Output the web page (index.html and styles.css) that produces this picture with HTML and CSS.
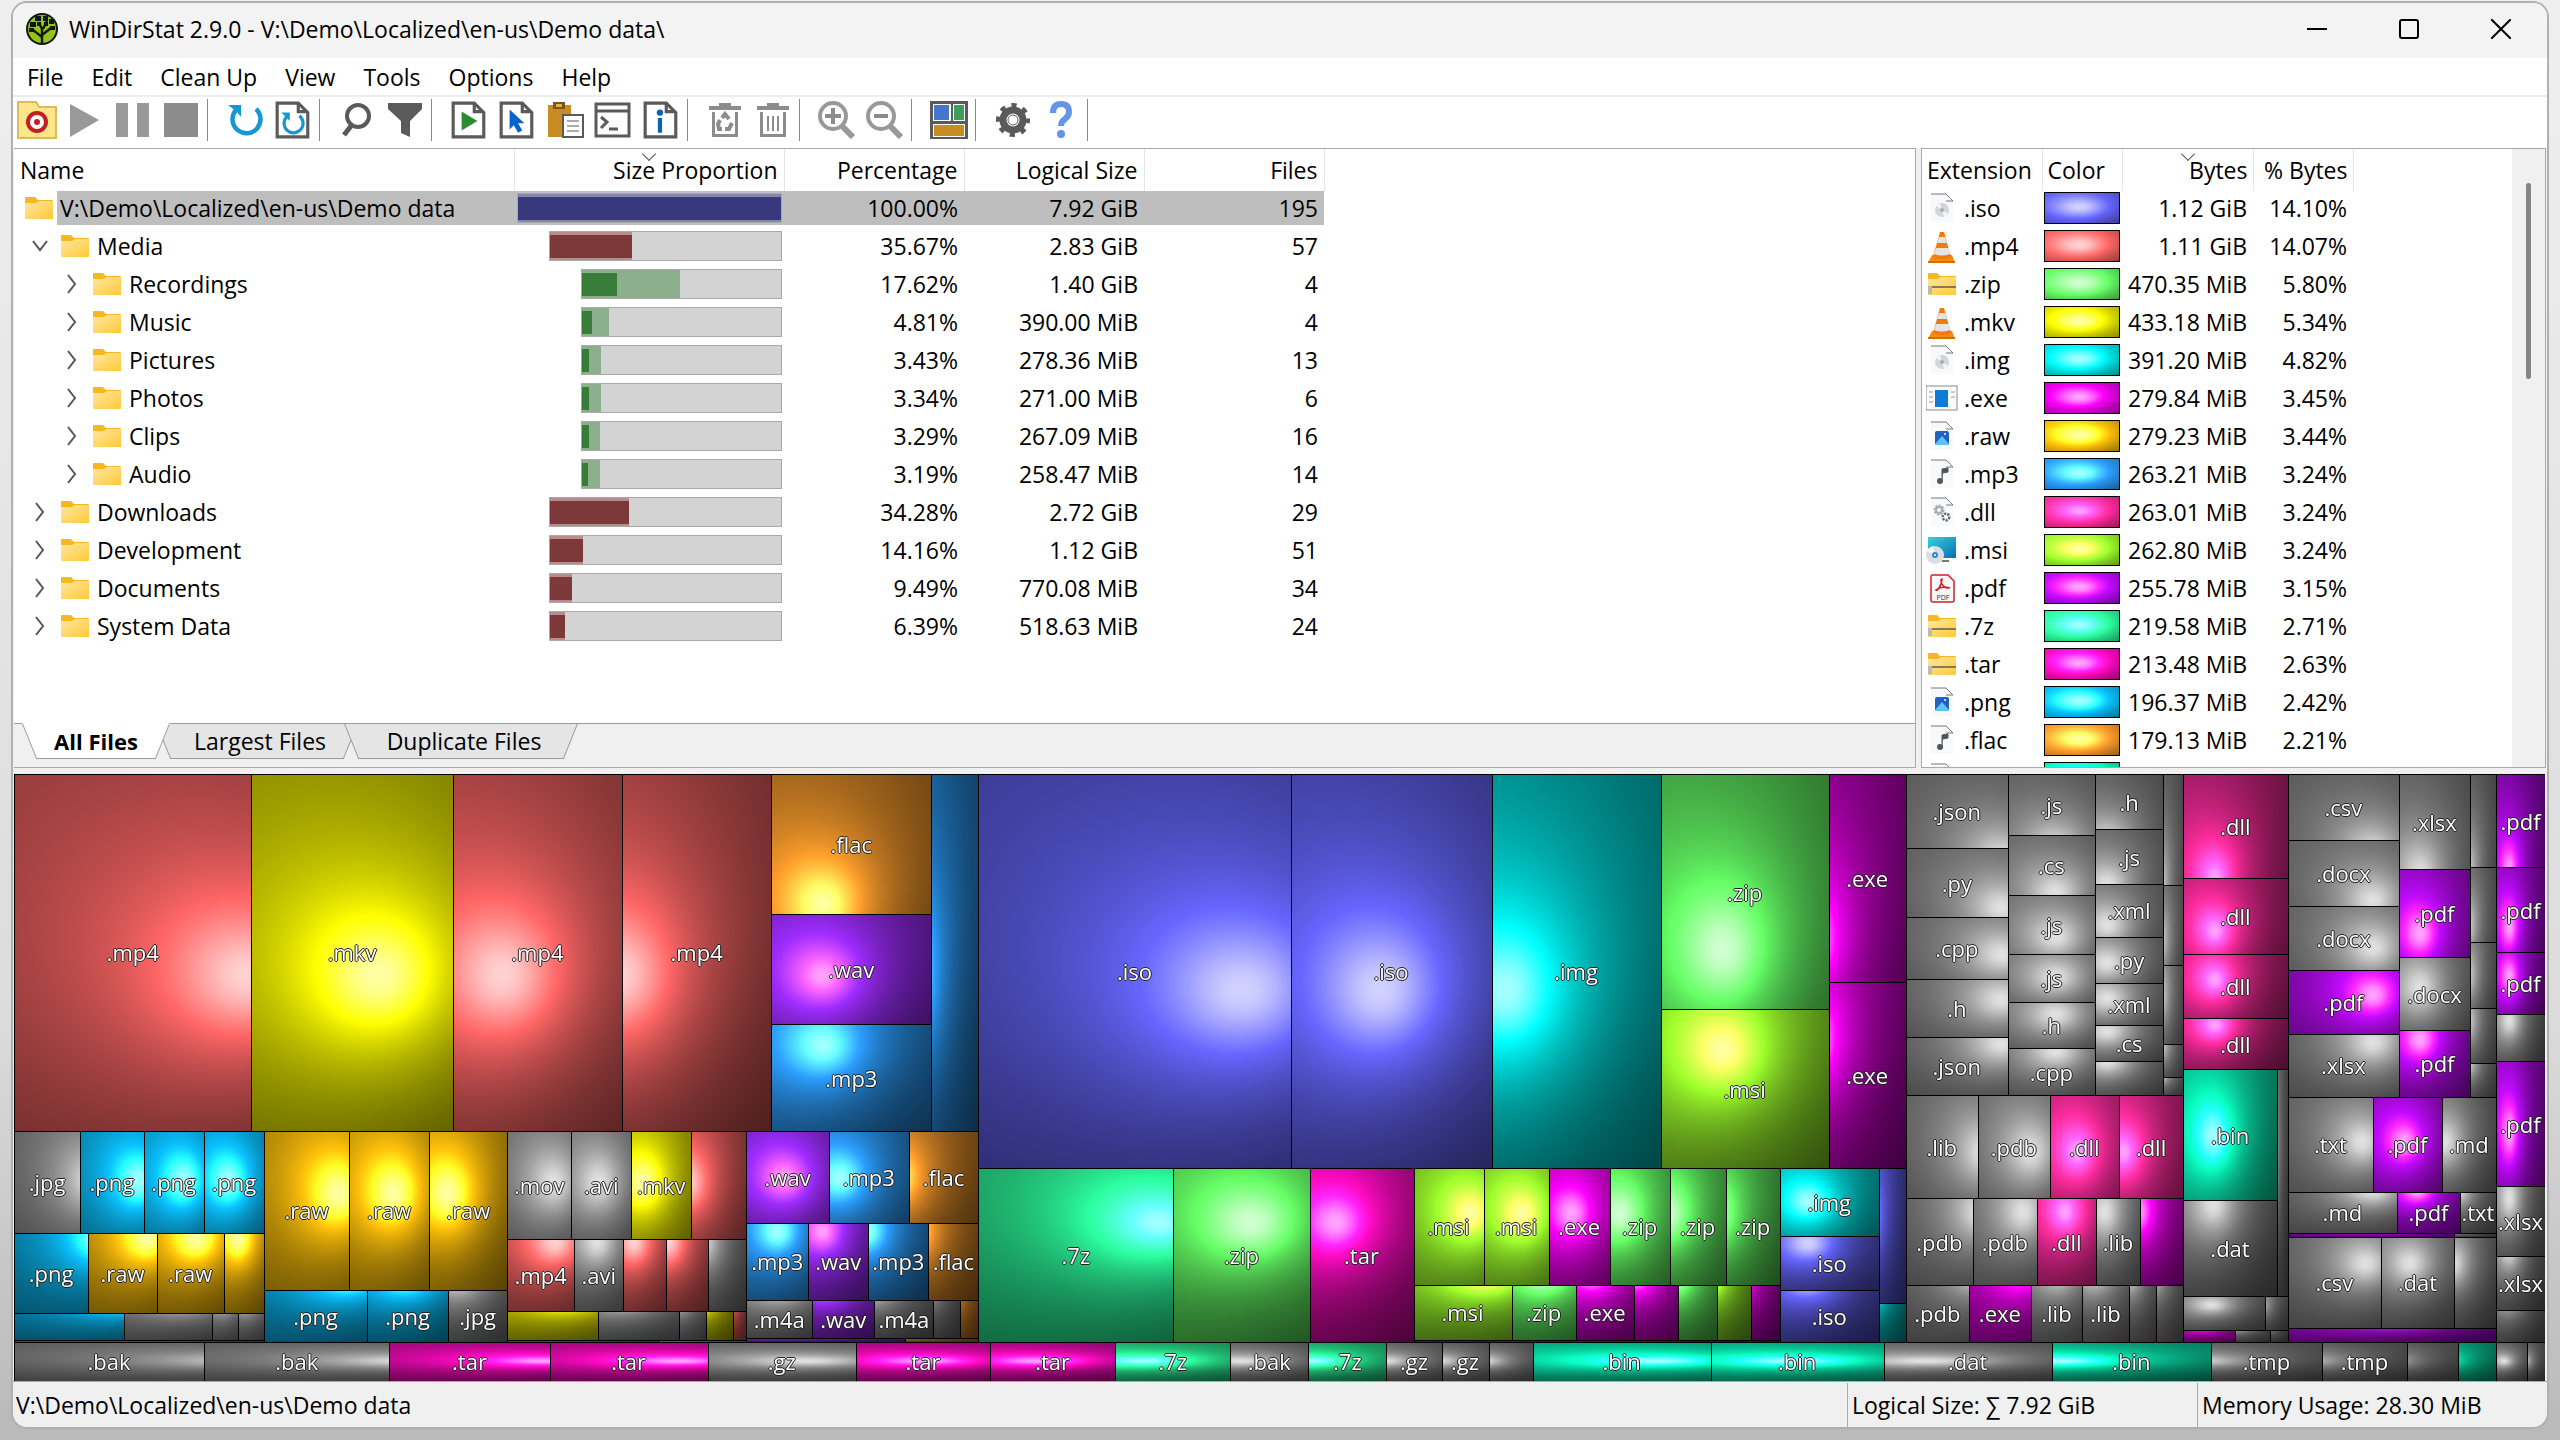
FILE: index.html
```html
<!DOCTYPE html>
<html lang="en">
<head>
    <meta charset="UTF-8">
    <meta name="viewport" content="width=device-width, initial-scale=1.0">
    <title>WinDirStat 2.9.0 - V:\Demo\Localized\en-us\Demo data\</title>
    <link rel="stylesheet" href="styles.css">
</head>
<body>
    <!-- Shared icons -->
    <svg class="sprite" aria-hidden="true">
        <defs>
            <linearGradient id="gold" x1="0" y1="0" x2="1" y2="1">
                <stop offset="0" stop-color="#ffe7a2"/>
                <stop offset="1" stop-color="#ffc938"/>
            </linearGradient>
            <linearGradient id="screen" x1="0" y1="0" x2="1" y2="1">
                <stop offset="0" stop-color="#35d3dc"/>
                <stop offset="1" stop-color="#0b6fae"/>
            </linearGradient>
            <symbol id="folder" viewBox="0 0 28 24">
                <path d="M0 2q0-1 1-1h9l3 3h14q1 0 1 1v3H0z" fill="#f5b820"/>
                <path d="M0 7h11l3-2h14v18H0z" fill="url(#gold)"/>
            </symbol>
            <symbol id="page" viewBox="0 0 32 32">
                <path d="M5 1h15l7 7v21H5z" fill="#f8f9fa"/>
                <path d="M5 1h15l7 7h-7" fill="none" stroke="#777" stroke-width="1"/>
            </symbol>
            <symbol id="i-disc" viewBox="0 0 32 32">
                <use href="#page"/>
                <circle cx="16" cy="17" r="7" fill="#d3d5d6"/>
                <path d="M16 17L10 13a7 7 0 0 1 4-3zM16 17l6 4a7 7 0 0 1-4 3z" fill="#f3f4f4"/>
                <circle cx="16" cy="17" r="2" fill="#aaa"/>
            </symbol>
            <symbol id="i-cone" viewBox="0 0 32 32">
                <path d="M6 24h20l3 8H2z" fill="#f58a0c"/>
                <path d="M2 30h27v2H2z" fill="#d96c00"/>
                <path d="M14 1h4l7 25q-9 4-18 0z" fill="#f07a10"/>
                <path d="M13 6h6l2 6H11zM10 17h13l1 6q-8 3-16 0z" fill="#e4e4e4"/>
            </symbol>
            <symbol id="i-zip" viewBox="0 0 32 32">
                <path d="M2 5q0-1 1-1h8l3 3h15q1 0 1 1v3H2z" fill="#f5b820"/>
                <path d="M2 10h10l3-2h15v18H2z" fill="url(#gold)"/>
                <path d="M3 18h27" stroke="#5f5a48" stroke-width="1.500"/>
                <path d="M2 17h4v8H2z" fill="#b9b9b9"/>
            </symbol>
            <symbol id="i-exe" viewBox="0 0 32 32">
                <rect x="0" y="3" width="31" height="24" fill="#fafafa" stroke="#8a8a8a"/>
                <rect x="9" y="7" width="13" height="17" fill="#0f7bd8"/>
                <path d="M3 9h4M3 14h4M3 19h4M25 9h4M25 14h4" stroke="#999"/>
            </symbol>
            <symbol id="i-img" viewBox="0 0 32 32">
                <use href="#page"/>
                <rect x="9" y="10" width="14" height="14" rx="2" fill="#2161c4"/>
                <path d="M9 23l7-8 7 8q0 1-2 1H11q-2 0-2-1z" fill="#5cc4f5"/>
                <circle cx="19" cy="13" r="1" fill="#fff"/>
            </symbol>
            <symbol id="i-note" viewBox="0 0 32 32">
                <use href="#page"/>
                <ellipse cx="14" cy="22" rx="3" ry="3" fill="#555"/>
                <path d="M16 22V10l6-1v4l-5 1" fill="#555" stroke="#555" stroke-width="1"/>
            </symbol>
            <symbol id="i-gears" viewBox="0 0 32 32">
                <use href="#page"/>
                <circle cx="13" cy="13" r="4" fill="none" stroke="#a5adb3" stroke-width="3" stroke-dasharray="2 1"/>
                <circle cx="13" cy="13" r="3" fill="none" stroke="#a5adb3" stroke-width="2"/>
                <circle cx="20" cy="20" r="3" fill="none" stroke="#5f666b" stroke-width="3" stroke-dasharray="2 1"/>
                <circle cx="20" cy="20" r="2" fill="#fff"/>
            </symbol>
            <symbol id="i-msi" viewBox="0 0 32 32">
                <rect x="2" y="2" width="28" height="21" fill="url(#screen)"/>
                <path d="M16 26h7" stroke="#777" stroke-width="2"/>
                <circle cx="9" cy="20" r="9" fill="#d9dee2"/>
                <path d="M9 20L1 16a9 9 0 0 1 6-5z" fill="#f6f8f9"/>
                <circle cx="9" cy="20" r="3" fill="#2f86c8"/>
                <circle cx="9" cy="20" r="1" fill="#fff"/>
            </symbol>
            <symbol id="i-pdf" viewBox="0 0 32 32">
                <path d="M6 2h16l6 6v19q0 2-2 2H7q-2 0-2-2V4q0-2 1-2z" fill="#f7f7f7" stroke="#cf2127" stroke-width="1.5"/>
                <path d="M16 6q-2 0 0 5 2 4 6 4t-3-1q-5 0-9 3 1 1 3-2 3-4 3-9z" fill="none" stroke="#cf2127" stroke-width="1.6"/>
                <text x="17" y="27" text-anchor="middle" font-size="7" fill="#333">PDF</text>
            </symbol>
            <symbol id="doc" viewBox="0 0 36 36">
                <path d="M3 2h20l9 9v23H3z" fill="#fff" stroke="#5a5a5a" stroke-width="3"/>
                <path d="M23 2v8h9" fill="none" stroke="#5a5a5a" stroke-width="3"/>
            </symbol>
        </defs>
    </svg>

    <div class="window">
        <header class="titlebar">
            <svg class="logo" viewBox="0 0 32 32" aria-hidden="true">
                <circle cx="16" cy="16" r="16" fill="#10180a"/>
                <circle cx="16" cy="16" r="14" fill="#98c11d"/>
                <path d="M16 31V15M16 24L7 17M16 22l9-7M16 16l-3-6M17 16l4-8" stroke="#10180a" stroke-width="2.4" fill="none"/>
                <path d="M4 9h6v5H4zM9 3h6v5H9zM17 3h5v5h-5zM23 6h5v5h-5zM24 13h5v4h-5zM3 15h5v4H3zM11 9h4v4h-4zM18 9h4v4h-4z" fill="#10180a"/>
            </svg>
            <h1>WinDirStat 2.9.0 - V:\Demo\Localized\en-us\Demo data\</h1>
            <div class="caption-buttons">
                <button type="button" aria-label="Minimize"><svg viewBox="0 0 20 20"><path d="M0 10h20" stroke="#000" stroke-width="2"/></svg></button>
                <button type="button" aria-label="Maximize"><svg viewBox="0 0 20 20"><rect x="1" y="1" width="18" height="18" rx="2" fill="none" stroke="#000" stroke-width="2"/></svg></button>
                <button type="button" aria-label="Close"><svg viewBox="0 0 20 20"><path d="M0 0l20 20M20 0L0 20" stroke="#000" stroke-width="2"/></svg></button>
            </div>
        </header>

        <nav class="menubar">
            <button type="button">File</button>
            <button type="button">Edit</button>
            <button type="button">Clean Up</button>
            <button type="button">View</button>
            <button type="button">Tools</button>
            <button type="button">Options</button>
            <button type="button">Help</button>
        </nav>

        <div class="toolbar" role="toolbar">
            <button type="button" aria-label="Open"><svg viewBox="0 0 40 38"><path d="M1 1h18l3 5h17v31H1z" fill="#ffe58a" stroke="#dcbc58" stroke-width="2"/><circle cx="20" cy="21" r="11" fill="#c01f24"/><circle cx="20" cy="21" r="7" fill="#fff"/><circle cx="20" cy="21" r="3" fill="#c01f24"/></svg></button>
            <button type="button" aria-label="Resume"><svg viewBox="0 0 40 38"><path d="M5 3l29 16L5 36z" fill="#999"/></svg></button>
            <button type="button" aria-label="Suspend"><svg viewBox="0 0 40 38"><path d="M3 2h12v34H3zM24 2h12v34H24z" fill="#999"/></svg></button>
            <button type="button" aria-label="Stop"><svg viewBox="0 0 40 38"><path d="M3 2h34v34H3z" fill="#8c8c8c"/></svg></button>
            <span class="sep"></span>
            <button type="button" aria-label="Refresh all"><svg viewBox="0 0 40 38"><path d="M31 8A14 14 0 1 1 11 9" fill="none" stroke="#1797d1" stroke-width="4.500"/><path d="M3 4h13v12l-4-5z" fill="#1797d1"/></svg></button>
            <button type="button" aria-label="Refresh selected"><svg viewBox="0 0 36 36"><use href="#doc"/><path d="M24 14a9 9 0 1 1-12 1" fill="none" stroke="#1797d1" stroke-width="3"/><path d="M7 11h8v8z" fill="#1797d1"/></svg></button>
            <span class="sep"></span>
            <button type="button" aria-label="Search"><svg viewBox="0 0 40 38"><circle cx="21" cy="15" r="11" fill="none" stroke="#5a5a5a" stroke-width="4"/><path d="M14 25L7 34" stroke="#5a5a5a" stroke-width="5"/></svg></button>
            <button type="button" aria-label="Filter"><svg viewBox="0 0 40 38"><path d="M3 2h34v6L25 20v16l-9-4V20L3 8z" fill="#5a5a5a"/></svg></button>
            <span class="sep"></span>
            <button type="button" aria-label="Open item"><svg viewBox="0 0 36 36"><use href="#doc"/><path d="M11 10l15 9-15 9z" fill="#2a8c34"/></svg></button>
            <button type="button" aria-label="Select in Explorer"><svg viewBox="0 0 36 36"><use href="#doc"/><path d="M11 8l14 13h-6l4 7-4 2-4-7-4 4z" fill="#0a63c9"/></svg></button>
            <button type="button" aria-label="Copy path"><svg viewBox="0 0 40 38"><path d="M3 4h23v32H3z" fill="#c78c22"/><path d="M8 1h12v7H8z" fill="#7a551a"/><path d="M11 3h6v3h-6z" fill="#e8ae45"/><path d="M18 14h20v22H18z" fill="#fff" stroke="#5a5a5a" stroke-width="2"/><path d="M22 20h12M22 25h12M22 30h12" stroke="#aaa" stroke-width="2"/></svg></button>
            <button type="button" aria-label="Command prompt"><svg viewBox="0 0 40 38"><path d="M3 3h33v32H3zM3 10h33" fill="none" stroke="#5a5a5a" stroke-width="3"/><path d="M8 16l6 5-6 6M16 28h9" fill="none" stroke="#5a5a5a" stroke-width="3"/></svg></button>
            <button type="button" aria-label="Properties"><svg viewBox="0 0 36 36"><use href="#doc"/><circle cx="17" cy="11" r="3" fill="#0a63b9"/><path d="M15 16h4v14h-4z" fill="#0a63b9"/></svg></button>
            <span class="sep"></span>
            <button type="button" aria-label="Recycle"><svg viewBox="0 0 40 38"><path d="M14 2h12v3h10v4H4V5h10zM7 11h3v22h20V11h3v25H7z" fill="#8c8c8c"/><path d="M17 17l3-4 4 5M27 22l-3 6h-4M17 28h-3l-1-5 2-4" fill="none" stroke="#8c8c8c" stroke-width="4"/></svg></button>
            <button type="button" aria-label="Delete"><svg viewBox="0 0 40 38"><path d="M14 2h12v3h10v4H4V5h10zM7 11h3v22h20V11h3v25H7z" fill="#8c8c8c"/><path d="M15 15v15M20 15v15M25 15v15" stroke="#8c8c8c" stroke-width="2"/></svg></button>
            <span class="sep"></span>
            <button type="button" aria-label="Zoom in"><svg viewBox="0 0 40 38"><circle cx="16" cy="15" r="13" fill="none" stroke="#999" stroke-width="4"/><path d="M25 25l11 11" stroke="#999" stroke-width="6"/><path d="M8 15h16M16 7v16" stroke="#8c8c8c" stroke-width="4"/></svg></button>
            <button type="button" aria-label="Zoom out"><svg viewBox="0 0 40 38"><circle cx="16" cy="15" r="13" fill="none" stroke="#999" stroke-width="4"/><path d="M25 25l11 11" stroke="#999" stroke-width="6"/><path d="M9 15h14" stroke="#8c8c8c" stroke-width="4"/></svg></button>
            <span class="sep"></span>
            <button type="button" aria-label="Show treemap"><svg viewBox="0 0 40 38"><path d="M1 0h38v38H1z" fill="#5a5a5a"/><path d="M4 3h18v17H4zM24 3h12v17H24zM4 23h32v13H4z" fill="#fff"/><path d="M5 4h15v15H5z" fill="#4775cb"/><path d="M25 4h10v15H25z" fill="#3a9f57"/><path d="M5 24h30v11H5z" fill="#c78c22"/></svg></button>
            <span class="sep"></span>
            <button type="button" aria-label="Settings"><svg viewBox="0 0 40 38"><circle cx="20" cy="19" r="10" fill="none" stroke="#5a5a5a" stroke-width="7"/><circle cx="20" cy="19" r="14" fill="none" stroke="#5a5a5a" stroke-width="6" stroke-dasharray="5 6" stroke-dashoffset="2"/><circle cx="20" cy="19" r="5" fill="none" stroke="#5a5a5a"/></svg></button>
            <button type="button" aria-label="Help"><svg viewBox="0 0 40 38"><path d="M12 12q0-9 8-9t8 8q0 4-4 7t-4 7" fill="none" stroke="#6495e6" stroke-width="6"/><circle cx="20" cy="33" r="4" fill="#6495e6"/></svg></button>
            <span class="sep"></span>
        </div>

        <main class="panes">
            <section class="tree-pane">
                <div class="tree-scroll">
                    <table class="tree">
                        <colgroup>
                            <col class="c-name"><col class="c-bar"><col class="c-pct"><col class="c-size"><col class="c-files">
                        </colgroup>
                        <thead>
                            <tr>
                                <th class="left">Name</th>
                                <th class="sorted">Size Proportion</th>
                                <th>Percentage</th>
                                <th>Logical Size</th>
                                <th>Files</th>
                            </tr>
                        </thead>
                        <tbody id="treeRows"></tbody>
                    </table>
                </div>
                <div class="tabs" role="tablist">
                    <button type="button" role="tab" class="tab tab-all active" aria-selected="true"><span>All Files</span></button>
                    <button type="button" role="tab" class="tab tab-largest" aria-selected="false"><span>Largest Files</span></button>
                    <button type="button" role="tab" class="tab tab-dup" aria-selected="false"><span>Duplicate Files</span></button>
                </div>
            </section>

            <section class="ext-pane">
                <table class="ext">
                    <colgroup>
                        <col class="c-ext"><col class="c-color"><col class="c-bytes"><col class="c-pbytes">
                    </colgroup>
                    <thead>
                        <tr>
                            <th class="left">Extension</th>
                            <th class="left">Color</th>
                            <th class="sorted">Bytes</th>
                            <th>% Bytes</th>
                        </tr>
                    </thead>
                    <tbody id="extRows"></tbody>
                </table>
                <div class="scrollbar"><div class="thumb"></div></div>
            </section>
        </main>

        <section class="treemap" id="treemap" aria-label="Treemap">
            <canvas id="cushions"></canvas>
        </section>

        <footer class="statusbar">
            <span class="path">V:\Demo\Localized\en-us\Demo data</span>
            <span class="total">Logical Size: ∑ 7.92 GiB</span>
            <span class="memory">Memory Usage: 28.30 MiB</span>
        </footer>
    </div>

    <script src="script.js"></script>
</body>
</html>
```
FILE: styles.css
```css
* {
    box-sizing: border-box;
}
body {
    margin: 0;
    height: 100vh;
    padding: 1px 11px 11px 11px;
    background: linear-gradient(#efefef, #dcdcdc 70%, #b9b9b9);
    color: #000;
    font-family: "Open Sans", "Noto Sans", sans-serif;
    font-size: 23px;
}
button {
    padding: 0;
    border: 0;
    background: none;
    color: inherit;
    font: inherit;
}
table {
    border-collapse: collapse;
    table-layout: fixed;
}
.sprite {
    position: absolute;
    width: 0;
    height: 0;
}

/* Window frame */
.window {
    display: flex;
    flex-direction: column;
    height: 100%;
    border: 2px solid #b0b0b0;
    border-radius: 16px;
    background: #f0f0f0;
    overflow: hidden;
}
.titlebar {
    display: flex;
    align-items: center;
    flex: none;
    height: 55px;
    padding-bottom: 3px;
    padding-left: 13px;
    background: #f3f3f3;
}
.titlebar h1 {
    flex: 1;
    margin: 0 0 0 11px;
    font-size: 23px;
    font-weight: normal;
}
.logo {
    width: 32px;
    height: 32px;
}
.caption-buttons {
    display: flex;
}
.caption-buttons button {
    width: 92px;
    height: 52px;
    line-height: 0;
}
.caption-buttons svg {
    width: 20px;
    height: 20px;
}
.menubar {
    display: flex;
    flex: none;
    gap: 28px;
    height: 39px;
    padding: 0 14px;
    border-bottom: 2px solid #eee;
    background: #fff;
}
.toolbar {
    display: flex;
    align-items: center;
    flex: none;
    height: 51px;
    padding-bottom: 5px;
    background: #fff;
}
.toolbar button {
    width: 48px;
    height: 44px;
    line-height: 0;
}
.toolbar svg {
    width: 40px;
    height: 38px;
}
.toolbar .sep {
    width: 1px;
    height: 42px;
    margin: 0 13px 0 2px;
    background: #8a8a8a;
}

/* Upper panes */
.panes {
    display: flex;
    flex: 620 1 0;
    gap: 5px;
    min-height: 0;
    padding: 0 1px;
}
.tree-pane, .ext-pane {
    border: 1px solid #aaa;
    background: #fff;
}
.tree-pane {
    display: flex;
    flex: 1;
    flex-direction: column;
    min-width: 0;
    border-left: 0;
}
.tree-scroll {
    flex: 1;
    min-height: 0;
    overflow: hidden;
}
th {
    position: relative;
    height: 42px;
    padding: 0 6px;
    border-right: 1px solid #e5e5e5;
    font-weight: normal;
    text-align: right;
    white-space: nowrap;
}
td {
    height: 38px;
    padding: 0 6px 4px;
    text-align: right;
    white-space: nowrap;
    line-height: 34px;
}
th.left {
    text-align: left;
}
.sorted::before {
    content: "";
    position: absolute;
    top: 0;
    left: 50%;
    width: 9px;
    height: 9px;
    border: solid #555;
    border-width: 0 1px 1px 0;
    transform: translateX(-50%) rotate(45deg);
}
.c-name { width: 500px; }
.c-bar { width: 270px; }
.c-pct { width: 180px; }
.c-size { width: 180px; }
.c-files { width: 180px; }
.tree {
    width: 1310px;
}
.tree .name {
    display: flex;
    align-items: center;
    padding: 0 0 4px;
    text-align: left;
}
.name svg.folder {
    width: 28px;
    height: 24px;
    margin-right: 4px;
}
.name span {
    padding: 0 4px;
}
.chevron {
    width: 20px;
    height: 20px;
    margin-right: 10px;
    fill: none;
    stroke: #555;
    stroke-width: 2;
}
.tree .level0 .name { padding-left: 11px; }
.tree .level1 .name { padding-left: 17px; }
.tree .level2 .name { padding-left: 49px; }
.tree .level0 .name span {
    flex: 1;
    height: 34px;
    margin-left: 1px;
    padding: 0 3px;
    background: #bebebe;
}
.tree .level0 .name svg.folder {
    margin-right: 3px;
}
.tree .level0 td + td {
    background: linear-gradient(#bebebe, #bebebe) top / 100% 34px no-repeat;
}
.tree .barcell {
    padding: 2px 2px 6px 3px;
}
.tree .level1 .barcell { padding-left: 35px; }
.tree .level2 .barcell { padding-left: 67px; }
.bar {
    position: relative;
    height: 30px;
    border: 1px solid #a9a9a9;
    background: #d3d3d3;
}
.bar div {
    position: absolute;
    left: 0;
}
.bar .share {
    top: 0;
    bottom: 0;
}
.bar .total {
    top: 3px;
    bottom: 2px;
}
.level0 .share { background: #8384b4; }
.level0 .total { background: #38397c; }
.level1 .share { background: #b98c8c; }
.level1 .total { background: #7d3839; }
.level2 .share { background: #8cb08d; }
.level2 .total { background: #387c39; }

/* Tabs under the tree */
.tabs {
    display: flex;
    flex: none;
    height: 44px;
    padding-left: 15px;
    border-top: 1px solid #999;
    background: #f0f0f0;
}
.tab {
    position: relative;
    height: 36px;
    margin-top: -1px;
    padding-left: 6px;
}
.tab span {
    position: relative;
    z-index: 1;
}
.tab::before, .tab::after {
    content: "";
    position: absolute;
    top: 0;
    bottom: 0;
    border-top: 1px solid #999;
    border-bottom: 1px solid #999;
    background: #e5e5e5;
}
.tab::before {
    left: 0;
    right: 40%;
    border-left: 1px solid #999;
    transform: skewX(22deg);
}
.tab::after {
    left: 40%;
    right: 0;
    border-right: 1px solid #999;
    transform: skewX(-22deg);
}
.tab-all { width: 134px; }
.tab-largest { width: 188px; }
.tab-dup { width: 220px; }
.tab.active {
    z-index: 1;
    padding-left: 0;
    font-weight: bold;
    font-size: 22px;
}
.tab.active::before, .tab.active::after {
    border-top-color: #fff;
    background: #fff;
}

/* Extension list */
.ext-pane {
    display: flex;
    flex: none;
    justify-content: space-between;
    width: 625px;
    overflow: hidden;
}
.ext {
    align-self: flex-start;
    width: 431px;
}
.c-ext { width: 120px; }
.c-color { width: 80px; }
.c-bytes { width: 131px; }
.c-pbytes { width: 100px; }
.ext th {
    padding: 0 5px;
}
.ext .kind {
    display: flex;
    gap: 6px;
    padding: 0 4px;
    text-align: left;
}
.kind svg {
    width: 32px;
    height: 32px;
    margin-top: 2px;
}
.ext .swatch {
    padding: 1px 2px 5px 1px;
    line-height: 0;
}
.swatch canvas {
    width: 76px;
    height: 32px;
    border: 1px solid #000;
}
.scrollbar {
    width: 33px;
    padding: 34px 14px;
    background: #f0f0f0;
}
.thumb {
    width: 5px;
    height: 196px;
    border-radius: 3px;
    background: #858585;
}

/* Treemap */
.treemap {
    position: relative;
    display: flex;
    flex: 607 1 0;
    min-height: 0;
    margin: 6px 2px 0 1px;
    background: #000;
}
.treemap canvas {
    position: absolute;
    top: 0;
    left: 0;
    width: 100%;
    height: 100%;
}
.node {
    display: flex;
    min-width: 0;
    min-height: 0;
}
.node.column {
    flex-direction: column;
}
.leaf {
    position: relative;
    align-items: center;
    justify-content: center;
    overflow: hidden;
    color: #fff;
    font-size: 22px;
    text-shadow: 1px 0 #222, -1px 0 #222, 0 1px #222, 0 -1px #222;
}

.statusbar {
    display: flex;
    align-items: center;
    flex: none;
    height: 46px;
    border-top: 1px solid #aaa;
}
.statusbar span {
    line-height: 44px;
}
.statusbar .path {
    flex: 1;
    padding-left: 3px;
}
.statusbar .total {
    width: 350px;
    padding-left: 4px;
    border-left: 1px solid #aaa;
}
.statusbar .memory {
    width: 350px;
    padding-left: 4px;
    border-left: 1px solid #aaa;
}
```
FILE: script.js
```js
// level, name, state, % of root, % of parent, size, files
const folders = [
    [0, 'V:\\Demo\\Localized\\en-us\\Demo data', '', '100.00', 100, '7.92 GiB', 195],
    [1, 'Media', 'open', '35.67', 35.67, '2.83 GiB', 57],
    [2, 'Recordings', 'closed', '17.62', 49.4, '1.40 GiB', 4],
    [2, 'Music', 'closed', '4.81', 13.5, '390.00 MiB', 4],
    [2, 'Pictures', 'closed', '3.43', 9.6, '278.36 MiB', 13],
    [2, 'Photos', 'closed', '3.34', 9.4, '271.00 MiB', 6],
    [2, 'Clips', 'closed', '3.29', 9.2, '267.09 MiB', 16],
    [2, 'Audio', 'closed', '3.19', 8.9, '258.47 MiB', 14],
    [1, 'Downloads', 'closed', '34.28', 34.28, '2.72 GiB', 29],
    [1, 'Development', 'closed', '14.16', 14.16, '1.12 GiB', 51],
    [1, 'Documents', 'closed', '9.49', 9.49, '770.08 MiB', 34],
    [1, 'System Data', 'closed', '6.39', 6.39, '518.63 MiB', 24]
];

// extension, icon, size, %
const extensions = [
    ['iso', 'disc', '1.12 GiB', '14.10%'],
    ['mp4', 'cone', '1.11 GiB', '14.07%'],
    ['zip', 'zip', '470.35 MiB', '5.80%'],
    ['mkv', 'cone', '433.18 MiB', '5.34%'],
    ['img', 'disc', '391.20 MiB', '4.82%'],
    ['exe', 'exe', '279.84 MiB', '3.45%'],
    ['raw', 'img', '279.23 MiB', '3.44%'],
    ['mp3', 'note', '263.21 MiB', '3.24%'],
    ['dll', 'gears', '263.01 MiB', '3.24%'],
    ['msi', 'msi', '262.80 MiB', '3.24%'],
    ['pdf', 'pdf', '255.78 MiB', '3.15%'],
    ['7z', 'zip', '219.58 MiB', '2.71%'],
    ['tar', 'zip', '213.48 MiB', '2.63%'],
    ['png', 'img', '196.37 MiB', '2.42%'],
    ['flac', 'note', '179.13 MiB', '2.21%']
];

const colors = {
    iso: [102, 102, 255], mp4: [255, 102, 102], zip: [102, 255, 102],
    mkv: [230, 230, 0], img: [0, 230, 230], exe: [230, 0, 230],
    raw: [255, 194, 10], mp3: [44, 159, 255], dll: [255, 44, 159],
    msi: [159, 255, 44], pdf: [194, 10, 255], '7z': [44, 255, 159],
    tar: [255, 10, 194], png: [10, 194, 255], flac: [255, 159, 44],
    bin: [10, 255, 194], wav: [159, 44, 255], other: [153, 153, 153]
};

// Treemap nodes: folders get a cushion ridge, strips only group items.
// Leaves are "size ext", with a trailing "-" when the label does not fit.
const folder = (size, dir, ...items) => ({ size, dir, items, ridge: true });
const strip = (size, dir, ...items) => ({ size, dir, items });

const root = strip(1, 'column',
    strip(567, 'row',
        folder(964, 'column', // Media
            strip(356, 'row',
                folder(757, 'row', '237 mp4', '201 mkv', '169 mp4', '149 mp4'),
                folder(207, 'row',
                    strip(160, 'column', '140 flac', '110 wav', '106 mp3'),
                    '47 mp3 -')),
            strip(211, 'row',
                folder(250, 'column',
                    strip(102, 'row', '66 jpg', '63 png', '60 png', '60 png'),
                    strip(80, 'row', '74 png', '68 raw', '67 raw', '40 raw -'),
                    strip(27, 'row', '110 png -', '88 jpg -', '26 jpg -', '26 jpg -'),
                    strip(2, 'row', '250 jpg -')),
                folder(243, 'column',
                    strip(159, 'row', '85 raw', '80 raw', '78 raw'),
                    strip(52, 'row', '103 png', '81 png', '59 jpg')),
                folder(239, 'column',
                    strip(108, 'row', '64 mov', '60 avi', '60 mkv', '55 mp4 -'),
                    strip(72, 'row', '67 mp4', '49 avi', '43 mp4 -', '42 mp4 -', '38 mov -'),
                    strip(29, 'row', '91 mkv -', '81 avi -', '27 avi -', '27 mkv -', '13 mp4 -'),
                    strip(2, 'row', '151 avi -', '88 mkv -')),
                folder(232, 'column',
                    strip(92, 'row', '83 wav', '80 mp3', '70 flac'),
                    strip(77, 'row', '62 mp3', '60 wav', '60 mp3', '50 flac'),
                    strip(38, 'row', '66 m4a', '62 wav', '59 m4a', '27 m4a -', '18 flac -'),
                    strip(4, 'row', '159 wav -', '73 flac -')))),
        folder(927, 'column', // Downloads
            strip(393, 'row',
                folder(682, 'row', '312 iso', '201 iso', '169 img'),
                folder(245, 'row',
                    strip(168, 'column', '235 zip', '158 msi'),
                    strip(77, 'column', '208 exe', '185 exe'))),
            strip(174, 'row',
                folder(435, 'row', '195 7z', '136 zip', '104 tar'),
                folder(366, 'column',
                    strip(117, 'row', '70 msi', '65 msi', '61 exe', '60 zip', '56 zip', '54 zip'),
                    strip(55, 'row', '98 msi', '64 zip', '58 exe', '44 exe -', '39 zip -', '34 msi -', '29 exe -'),
                    strip(2, 'row', '366 exe -')),
                folder(126, 'row',
                    strip(99, 'column', '68 img', '54 iso', '52 iso'),
                    strip(27, 'column', '135 iso -', '39 img -')))),
        folder(382, 'row', // Development
            strip(278, 'column',
                folder(320, 'row',
                    strip(102, 'column', '74 json', '68 py', '62 cpp', '57 h', '58 json'),
                    strip(87, 'column', '61 js', '60 cs', '58 js', '48 js', '46 h', '47 cpp'),
                    strip(68, 'column', '55 h', '55 js', '52 xml', '46 py', '42 xml', '36 cs', '34 h -'),
                    strip(20, 'column', '111 js -', '79 js -', '79 js -', '33 js -', '18 js -')),
                folder(246, 'column',
                    strip(103, 'row', '72 lib', '72 pdb', '69 dll', '64 dll'),
                    strip(86, 'row', '67 pdb', '64 pdb', '59 dll', '44 lib', '43 exe -'),
                    strip(57, 'row', '63 pdb', '62 exe', '51 lib', '47 lib', '27 lib -', '27 lib -'))),
            strip(105, 'column',
                folder(295, 'column', '104 dll', '76 dll', '64 dll', '51 dll'),
                folder(226, 'row',
                    strip(94, 'column', '130 bin', '96 dat'),
                    '11 dat -'),
                folder(46, 'column',
                    strip(34, 'row', '82 dat -', '23 dat -'),
                    strip(12, 'row', '52 exe -', '35 dat -', '18 dat -')))),
        folder(257, 'row', // Documents
            strip(208, 'column',
                folder(322, 'row',
                    strip(111, 'column', '66 csv', '66 docx', '64 docx', '64 pdf', '62 xlsx'),
                    strip(71, 'column', '95 xlsx', '88 pdf', '73 docx', '66 pdf'),
                    strip(26, 'column', '93 csv -', '75 csv -', '66 csv -', '55 csv -', '33 csv -')),
                folder(140, 'column',
                    strip(95, 'row', '85 txt', '69 pdf', '54 md'),
                    strip(41, 'row', '109 md', '63 pdf', '36 txt'),
                    strip(4, 'row', '166 pdf -', '42 txt -')),
                folder(105, 'column',
                    strip(91, 'row', '93 csv', '73 dat', '42 dat -'),
                    strip(14, 'row', '208 pdf -'))),
            strip(49, 'column',
                folder(287, 'column', '93 pdf', '85 pdf', '62 pdf', '47 md -'),
                folder(280, 'column', '124 pdf', '70 xlsx', '54 xlsx', '32 md -')))),
    folder(39, 'row', // System Data
        folder(1518, 'row', '190 bak', '185 bak', '160 tar', '158 tar', '148 gz', '134 tar', '125 tar',
            '115 7z', '78 bak', '78 7z', '55 gz', '47 gz', '44 gz -'),
        folder(963, 'row', '178 bin', '173 bin', '168 dat', '159 bin', '111 tmp', '85 tmp', '51 tmp -', '38 bin -'),
        folder(49, 'row', '31 tmp -', '18 tmp -')));

// Cushion shading settings
const HEIGHT = 0.38;
const SCALE = 0.91;
const BRIGHTNESS = 0.88 / 0.6;
const AMBIENT = 0.13;
const norm = Math.sqrt(1 + 1 + 100);
const light = [-1 / norm, -1 / norm, 10 / norm];

function addRidge(r, s, h) {
    const wf = 4 * h / (r.right - r.left);
    const hf = 4 * h / (r.bottom - r.top);
    return [s[0] - wf, s[1] - hf, s[2] + wf * (r.right + r.left), s[3] + hf * (r.bottom + r.top)];
}

// Pushes the overflow of a channel into the other two
function normalize(c) {
    for (let i = 0; i < 3; i++) {
        if (c[i] > 255) {
            const extra = (c[i] - 255) / 2;
            const j = (i + 1) % 3;
            const k = (i + 2) % 3;
            c[i] = 255;
            c[j] += extra;
            c[k] += extra;
            if (c[j] > 255) {
                c[k] += c[j] - 255;
                c[j] = 255;
            } else if (c[k] > 255) {
                c[j] += c[k] - 255;
                c[k] = 255;
            }
        }
    }
}

function drawCushion(ctx, r, s, color) {
    const w = r.right - r.left;
    const h = r.bottom - r.top;
    if (w <= 0 || h <= 0) return;
    const image = ctx.createImageData(w, h);
    let p = 0;
    for (let y = r.top; y < r.bottom; y++) {
        for (let x = r.left; x < r.right; x++) {
            const nx = -(2 * s[0] * (x + 0.5) + s[2]);
            const ny = -(2 * s[1] * (y + 0.5) + s[3]);
            const cosa = (nx * light[0] + ny * light[1] + light[2]) / Math.sqrt(nx * nx + ny * ny + 1);
            const b = (Math.max(0, Math.min(1, cosa * (1 - AMBIENT))) + AMBIENT) * BRIGHTNESS;
            const c = [color[0] * b, color[1] * b, color[2] * b];
            normalize(c);
            image.data[p++] = c[0];
            image.data[p++] = c[1];
            image.data[p++] = c[2];
            image.data[p++] = 255;
        }
    }
    ctx.putImageData(image, r.left, r.top);
}

function buildNode(node, parent) {
    const el = document.createElement('div');
    if (typeof node === 'string') {
        const [size, ext, hidden] = node.split(' ');
        el.className = 'node leaf';
        el.style.flex = size + ' 1 0';
        el.color = colors[ext] || colors.other;
        if (!hidden) el.textContent = '.' + ext;
    } else {
        el.className = 'node ' + node.dir;
        el.style.flex = node.size + ' 1 0';
        el.ridge = node.ridge;
        node.items.forEach(item => buildNode(item, el));
    }
    parent.appendChild(el);
    return el;
}

function paintNode(ctx, el, origin, surface, h) {
    const box = el.getBoundingClientRect();
    const r = {
        left: Math.round(box.left - origin.left),
        top: Math.round(box.top - origin.top),
        right: Math.round(box.right - origin.left),
        bottom: Math.round(box.bottom - origin.top)
    };
    if (el.color) {
        const s = addRidge(r, surface, h);
        drawCushion(ctx, { left: r.left + 1, top: r.top + 1, right: r.right, bottom: r.bottom }, s, el.color);
        return;
    }
    if (el.ridge) {
        surface = addRidge(r, surface, h);
        h *= SCALE;
    }
    for (const child of el.children) paintNode(ctx, child, origin, surface, h);
}

function paintTreemap() {
    const canvas = document.getElementById('cushions');
    const origin = canvas.getBoundingClientRect();
    canvas.width = Math.round(origin.width);
    canvas.height = Math.round(origin.height);
    paintNode(canvas.getContext('2d'), rootEl, origin, [0, 0, 0, 0], HEIGHT * SCALE);
}

const chevrons = { open: 'M2 5l7 9 7-9', closed: 'M5 1l7 9-7 9' };

document.getElementById('treeRows').innerHTML = folders.map(([level, name, state, pct, share, size, files]) => `
    <tr class="level${level}">
        <td class="name">
            ${state ? `<svg class="chevron" viewBox="0 0 20 20"><path d="${chevrons[state]}"/></svg>` : ''}
            <svg class="folder"><use href="#folder"/></svg><span>${name}</span>
        </td>
        <td class="barcell"><div class="bar"><div class="share" style="width:${share}%"></div><div class="total" style="width:${pct}%"></div></div></td>
        <td>${pct}%</td>
        <td>${size}</td>
        <td>${files}</td>
    </tr>`).join('');

// One more row peeks out below the last complete one
document.getElementById('extRows').innerHTML = extensions.concat([['', 'note', '', '']]).map(([ext, icon, size, pct]) => `
    <tr>
        <td class="kind"><svg><use href="#i-${icon}"/></svg>${ext ? '.' + ext : ''}</td>
        <td class="swatch"><canvas width="74" height="30" data-ext="${ext || 'bin'}"></canvas></td>
        <td>${size}</td>
        <td>${pct}</td>
    </tr>`).join('');

document.querySelectorAll('.swatch canvas').forEach(canvas => {
    const r = { left: 0, top: 0, right: 74, bottom: 30 };
    drawCushion(canvas.getContext('2d'), r, addRidge(r, [0, 0, 0, 0], HEIGHT * SCALE), colors[canvas.dataset.ext]);
});

const rootEl = buildNode(root, document.getElementById('treemap'));
paintTreemap();
window.addEventListener('resize', paintTreemap);
```
